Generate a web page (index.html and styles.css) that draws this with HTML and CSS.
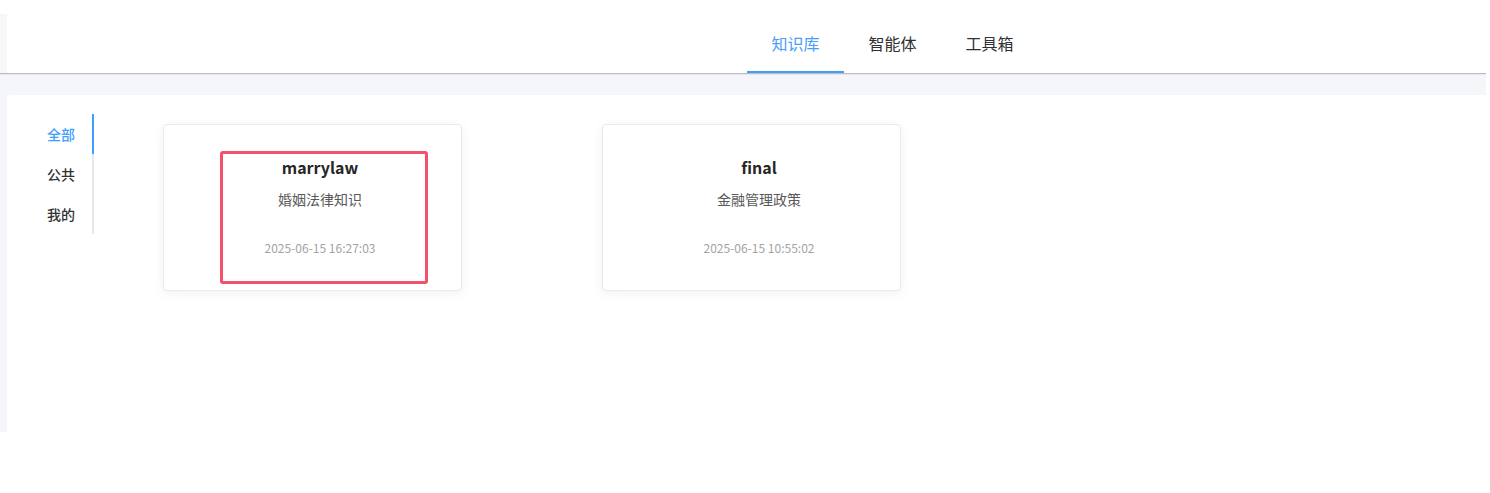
FILE: index.html
```html
<!DOCTYPE html>
<html lang="zh-CN">
<head>
<meta charset="utf-8">
<title>知识库</title>
<link rel="stylesheet" href="styles.css">
</head>
<body>
<div class="page">
  <header class="header">
    <div class="header-side"></div>
    <nav class="top-tabs">
      <a class="top-tab active">知识库</a>
      <a class="top-tab">智能体</a>
      <a class="top-tab">工具箱</a>
    </nav>
  </header>
  <main class="main">
    <section class="panel">
      <ul class="side-tabs">
        <li class="side-tab active">全部</li>
        <li class="side-tab">公共</li>
        <li class="side-tab">我的</li>
      </ul>
      <div class="cards">
        <div class="card">
          <div class="card-title">marrylaw</div>
          <div class="card-desc">婚姻法律知识</div>
          <div class="card-date">2025-06-15 16:27:03</div>
          <div class="highlight"></div>
        </div>
        <div class="card">
          <div class="card-title">final</div>
          <div class="card-desc">金融管理政策</div>
          <div class="card-date">2025-06-15 10:55:02</div>
        </div>
      </div>
    </section>
  </main>
</div>
</body>
</html>
```

FILE: styles.css
```css
* { box-sizing: border-box; }
html, body { margin: 0; padding: 0; background: #ffffff; }
body {
  font-family: "Noto Sans CJK SC", "Noto Sans", sans-serif;
  color: #303133;
}
.page { width: 1486px; }

.header {
  height: 74px;
  display: flex;
  border-bottom: 1px solid #bdbdbd;
  box-shadow: 0 1px 0 #e6e7ea;
  position: relative;
  z-index: 1;
}
.header-side {
  width: 7px;
  margin-top: 14px;
  background: #f7f7f8;
}
.top-tabs {
  display: flex;
  margin-left: 740px;
}
.top-tab {
  width: 97px;
  height: 73px;
  display: flex;
  align-items: center;
  justify-content: center;
  padding-top: 15px;
  font-size: 16px;
  color: #303133;
  border-bottom: 2px solid transparent;
  cursor: pointer;
}
.top-tab.active {
  color: #4a9cf8;
  border-bottom-color: #409eff;
}

.main {
  height: 358px;
  background: #f5f6fa;
  padding: 21px 0 0 7px;
}
.panel {
  height: 337px;
  background: #ffffff;
  border-radius: 4px 0 0 0;
  display: flex;
  align-items: flex-start;
  padding-top: 19px;
}
.side-tabs {
  list-style: none;
  margin: 0;
  padding: 0;
  width: 87px;
  border-right: 2px solid #e4e7ed;
}
.side-tab {
  height: 40px;
  line-height: 40px;
  text-align: right;
  padding-right: 17px;
  font-size: 14px;
  font-weight: 500;
  color: #303133;
  margin-right: -2px;
  border-right: 2px solid transparent;
}
.side-tab.active {
  color: #409eff;
  border-right-color: #409eff;
}

.cards {
  display: flex;
  gap: 140px;
  padding: 10px 0 0 69px;
}
.card {
  position: relative;
  width: 299px;
  height: 167px;
  background: #ffffff;
  border: 1px solid #e9ebf0;
  border-radius: 4px;
  box-shadow: 0 2px 12px rgba(0, 0, 0, 0.06);
  text-align: center;
  padding: 30px 0 0 15px;
}
.card-title {
  font-size: 16px;
  line-height: 24px;
  font-weight: 700;
  color: #262626;
}
.card-desc {
  margin-top: 9px;
  font-size: 14px;
  line-height: 22px;
  color: #595959;
}
.card-date {
  margin-top: 29px;
  font-size: 12px;
  line-height: 18px;
  color: #a3a3a3;
}
.highlight {
  position: absolute;
  left: 56px;
  top: 26px;
  width: 208px;
  height: 133px;
  border: 3px solid #f4506a;
  border-radius: 3px;
  pointer-events: none;
}
```
